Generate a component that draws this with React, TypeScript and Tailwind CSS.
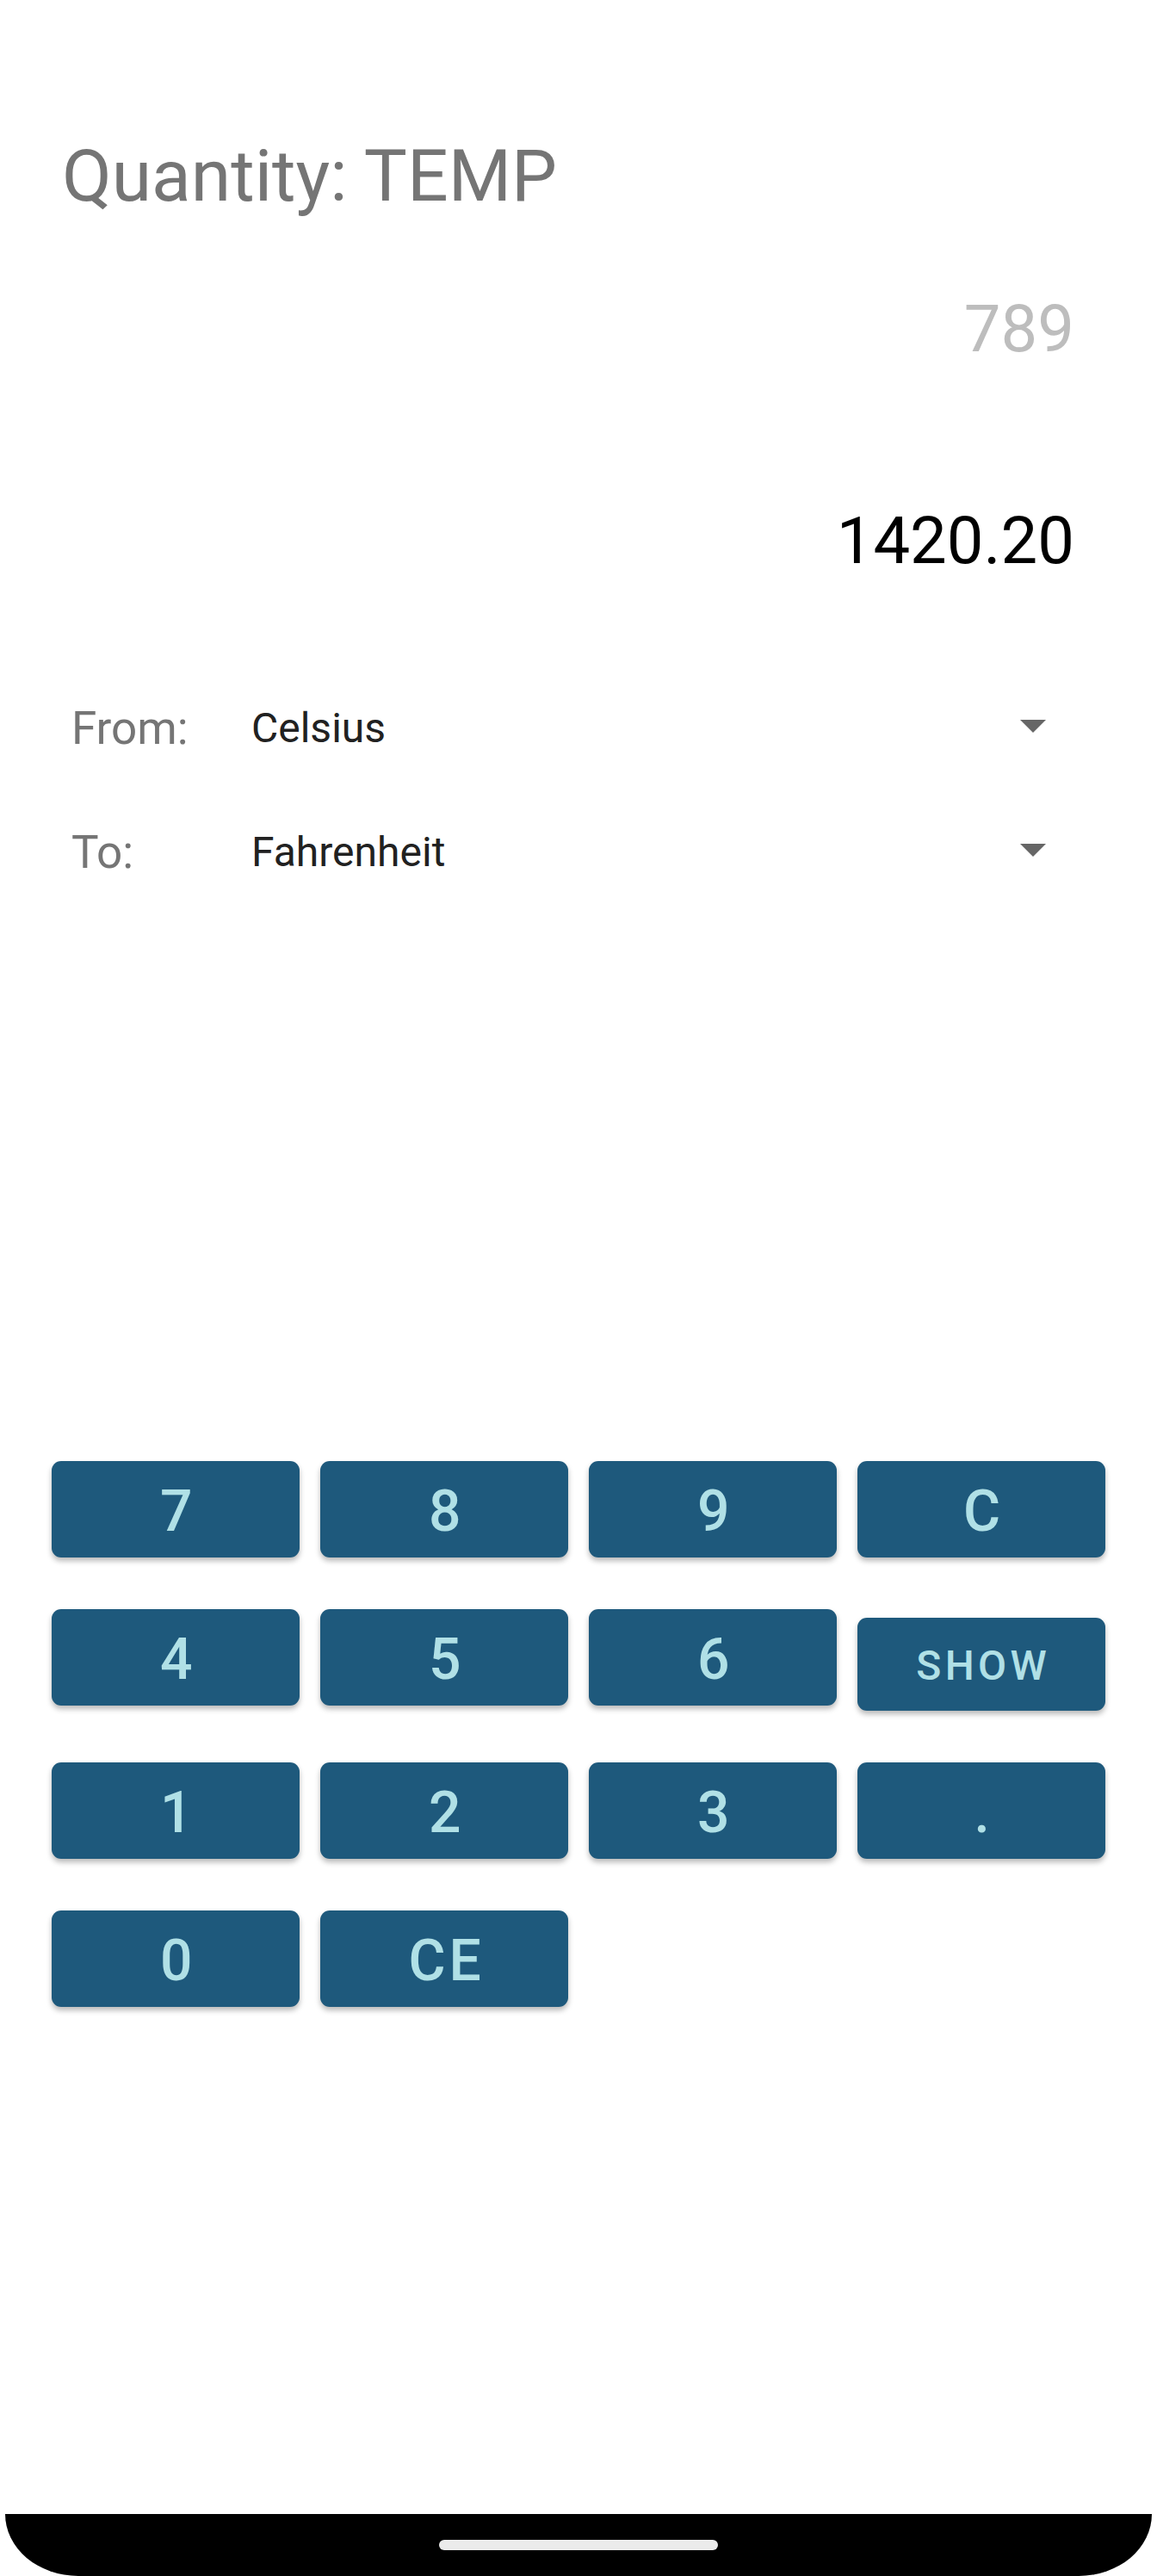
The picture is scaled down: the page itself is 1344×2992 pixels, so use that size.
import React from "react";

type Key = {
  label: string;
  size: "digit" | "word";
};

const keys: Key[] = [
  { label: "7", size: "digit" },
  { label: "8", size: "digit" },
  { label: "9", size: "digit" },
  { label: "C", size: "digit" },
  { label: "4", size: "digit" },
  { label: "5", size: "digit" },
  { label: "6", size: "digit" },
  { label: "SHOW", size: "word" },
  { label: "1", size: "digit" },
  { label: "2", size: "digit" },
  { label: "3", size: "digit" },
  { label: ".", size: "digit" },
  { label: "0", size: "digit" },
  { label: "CE", size: "digit" },
];

function Caret() {
  return (
    <svg width="30" height="15" viewBox="0 0 30 15" className="shrink-0">
      <path d="M0 0 L30 0 L15 15 Z" fill="#666666" />
    </svg>
  );
}

function UnitRow({ label, value }: { label: string; value: string }) {
  return (
    <div className="flex h-[52px] items-center pl-[83px] pr-[129px]">
      <span className="w-[209px] text-[53px] leading-none text-[#757575]">{label}</span>
      <span className="flex-1 text-[48px] leading-none text-[#212121]">{value}</span>
      <div className="-mt-[5px]">
        <Caret />
      </div>
    </div>
  );
}

function PadKey({ k }: { k: Key }) {
  if (k.size === "word") {
    return (
      <button className="mt-[10px] flex h-[108px] items-center justify-center rounded-[11px] bg-[#1e597c] pt-[4px] shadow-[0_4px_6px_rgba(0,0,0,0.28)]">
        <span className="pl-[0.09em] text-[48px] font-medium leading-none tracking-[0.09em] text-[#b0e0e6]">
          {k.label}
        </span>
      </button>
    );
  }
  return (
    <button className="flex h-[112px] items-center justify-center rounded-[11px] bg-[#1e597c] pt-[6px] shadow-[0_4px_6px_rgba(0,0,0,0.28)]">
      <span className="pl-[0.08em] text-[66px] font-medium leading-none tracking-[0.06em] text-[#b0e0e6]">
        {k.label}
      </span>
    </button>
  );
}

export default function App() {
  return (
    <div
      className="flex h-[2992px] w-[1344px] flex-col bg-white"
      style={{ fontFamily: "Roboto, 'Noto Sans', sans-serif" }}
    >
      <h1 className="mt-[163px] pl-[72px] text-[84px] font-normal leading-none text-[#757575]">
        Quantity: TEMP
      </h1>

      <div className="mt-[97px] pr-[96px] text-right text-[76px] leading-none text-[#bdbdbd]">789</div>
      <div className="mt-[170px] pr-[96px] text-right text-[76px] leading-none text-black">1420.20</div>

      <div className="mt-[154px] flex flex-col gap-[92px]">
        <UnitRow label="From:" value="Celsius" />
        <UnitRow label="To:" value="Fahrenheit" />
      </div>

      <div className="mt-[681px] grid grid-cols-4 items-start gap-x-6 gap-y-[60px] px-[60px]">
        {keys.map((k) => (
          <PadKey key={k.label} k={k} />
        ))}
      </div>

      <div className="mx-[6px] mt-auto flex h-[72px] justify-center rounded-b-[85px_72px] bg-black pt-[30px]">
        <div className="h-[12px] w-[324px] rounded-full bg-[#ebebeb]" />
      </div>
    </div>
  );
}
